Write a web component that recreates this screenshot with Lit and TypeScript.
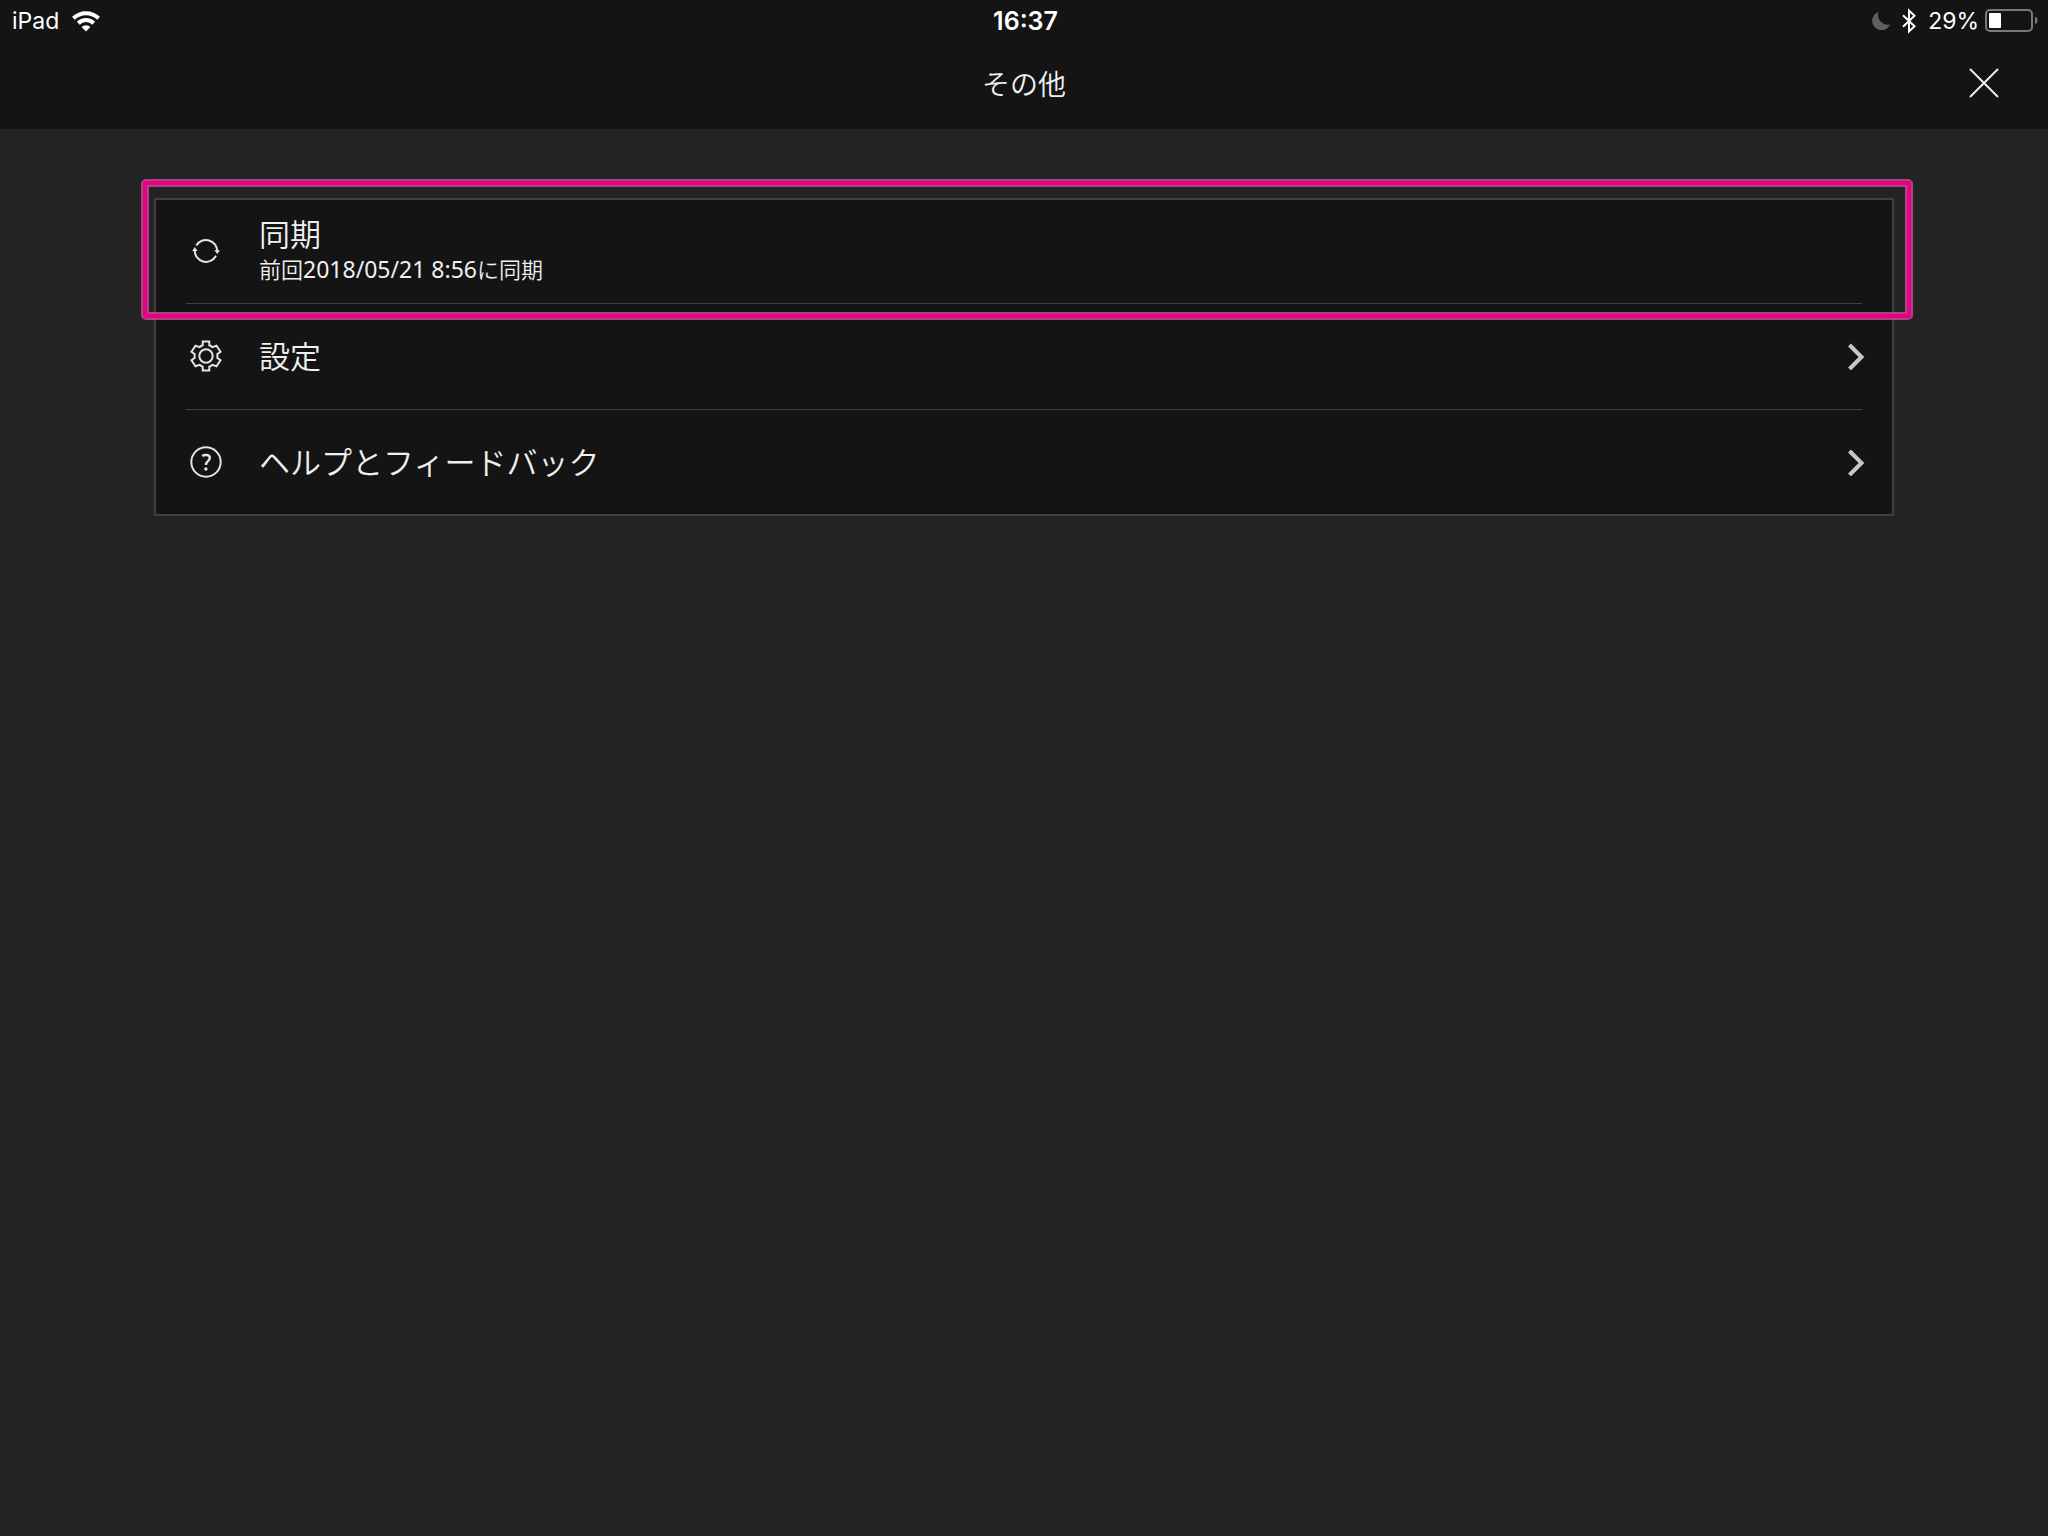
import { LitElement, html, css, svg, nothing } from "lit";
import { customElement } from "lit/decorators.js";

interface MenuEntry {
  label: string;
  note?: unknown;
  icon: unknown;
  chevron: boolean;
  highlighted?: boolean;
}

const syncIcon = svg`
  <path d="M7.300 12.500A11.300 11.300 0 0 1 28.300 18.500M27 22.800A11.300 11.300 0 0 1 5.700 17" />
  <path class="solid" d="M25.400 17.300H31L28.300 21ZM3.200 18H8.600L5.700 14Z" />`;

const gearIcon = svg`
  <path d="M13.700 2.500H20.300V6.300A11.500 11.500 0 0 1 23.400 8.100L27.500 6.800L31.500 12.800L28.300 15.200A11.500 11.500 0 0 1 28.300 18.800L31.500 21.200L27.500 27.200L23.400 25.900A11.500 11.500 0 0 1 20.300 27.700V31.500H13.700V27.700A11.500 11.500 0 0 1 10.600 25.900L6.500 27.200L2.500 21.200L5.700 18.800A11.500 11.500 0 0 1 5.700 15.200L2.500 12.800L6.500 6.800L10.600 8.100A11.500 11.500 0 0 1 13.700 6.300Z" />
  <circle cx="17" cy="17" r="6.700" />`;

const helpIcon = svg`
  <circle cx="17" cy="17" r="14.700" />
  <path class="mark" d="M13.200 10.900C15.500 9.500 20.800 9.300 20.800 13.100C20.800 16.300 16.900 16.200 16.900 20" />
  <circle class="solid" cx="16.900" cy="24" r="1.700" />`;

const entries: MenuEntry[] = [
  {
    label: "同期",
    note: html`前回<time class="date" datetime="2018-05-21T08:56">2018/05/21 8:56</time>に同期`,
    icon: syncIcon,
    chevron: false,
    highlighted: true,
  },
  { label: "設定", icon: gearIcon, chevron: true },
  { label: "ヘルプとフィードバック", icon: helpIcon, chevron: true },
];

@customElement("status-bar")
export class StatusBar extends LitElement {
  static styles = css`
    :host {
      display: grid;
      grid-template-columns: 1fr auto 1fr;
      align-items: center;
      height: 41px;
      padding: 0 9px 0 12px;
      color: #fff;
      font: 23px/32px Inter, "Liberation Sans", sans-serif;
    }
    .group {
      display: flex;
      align-items: center;
      gap: 12px;
    }
    .right {
      justify-content: flex-end;
    }
    .power {
      display: flex;
      align-items: center;
      gap: 6px;
    }
    .time {
      font-size: 25px;
      font-weight: 600;
    }
    svg {
      display: block;
    }
  `;

  render() {
    return html`
      <div class="group">
        <span>iPad</span>
        <svg width="30" height="24" viewBox="0 0 30 24" fill="none" stroke="#fff" stroke-width="4" aria-label="Wi-Fi">
          <path d="M2.400 9.200A18.200 18.200 0 0 1 27.600 9.200" />
          <path d="M7.300 14.200A11 11 0 0 1 22.700 14.200" />
          <path d="M15 22.500L10.600 18A6.200 6.200 0 0 1 19.400 18Z" fill="#fff" stroke="none" />
        </svg>
      </div>
      <span class="time">16:37</span>
      <div class="group right">
        <svg width="18" height="20" viewBox="0 0 18 20" aria-label="おやすみモード">
          <path d="M6.500 1A9.300 9.300 0 1 0 18 13.500A9.800 9.800 0 0 1 6.500 1Z" fill="#606060" />
        </svg>
        <svg width="14" height="26" viewBox="0 0 14 26" fill="none" stroke="#fff" stroke-width="2" aria-label="Bluetooth">
          <path d="M1 7.200L12.500 18.200L7 23.500V2.500L12.500 7.800L1 18.800" />
        </svg>
        <div class="power">
          <span>29%</span>
          <svg width="54" height="23" viewBox="0 0 54 23" aria-hidden="true">
            <rect x="1" y="1" width="46" height="21" rx="4" fill="none" stroke="#7a7a7a" stroke-width="2" />
            <rect x="4" y="4" width="12" height="15" rx="1" fill="#fff" />
            <path d="M50 7.500A4.400 4.400 0 0 1 50 15.500Z" fill="#7a7a7a" />
          </svg>
        </div>
      </div>
    `;
  }
}

@customElement("menu-row")
export class MenuRow extends LitElement {
  static properties = { entry: { attribute: false } };
  declare entry: MenuEntry;

  static styles = css`
    :host {
      display: block;
      position: relative;
    }
    .row {
      display: flex;
      align-items: center;
      box-sizing: border-box;
      width: 100%;
      height: 106px;
      margin: 0;
      padding: 0 29px 2px 35px;
      border: 0;
      background: none;
      color: #f0f0f0;
      text-align: left;
      font: 350 31px/40px "Noto Sans CJK JP", sans-serif;
    }
    .icon {
      flex: none;
      fill: none;
      stroke: #e4e4e4;
      stroke-width: 2;
    }
    .solid {
      fill: #e4e4e4;
      stroke: none;
    }
    .mark {
      stroke-width: 2.400;
    }
    .texts {
      flex: 1;
      display: flex;
      flex-direction: column;
      padding: 0 0 3px 36px;
    }
    .note {
      font-size: 22px;
      line-height: 30px;
    }
    .date {
      font: 400 23px/30px "Noto Sans", sans-serif;
    }
    .chevron {
      flex: none;
      fill: none;
      stroke: #c7c7cc;
      stroke-width: 4;
    }
    .frame {
      position: absolute;
      inset: -19px -19px -16px -13px;
      border: 8px solid rgba(200, 80, 150, 0.8);
      border-radius: 5px;
      pointer-events: none;
    }
    .frame::after {
      content: "";
      position: absolute;
      inset: -6px;
      border: 4px solid #ea0085;
    }
  `;

  render() {
    const { label, note, icon, chevron, highlighted } = this.entry;
    return html`
      <button class="row" type="button">
        <svg class="icon" width="34" height="34" viewBox="0 0 34 34" aria-hidden="true">${icon}</svg>
        <span class="texts">
          <span>${label}</span>
          ${note ? html`<span class="note">${note}</span>` : nothing}
        </span>
        ${chevron
          ? html`<svg class="chevron" width="18" height="28" viewBox="0 0 18 28" aria-hidden="true">
              <path d="M2.500 3L14.500 15L2.500 27" />
            </svg>`
          : nothing}
      </button>
      ${highlighted ? html`<div class="frame"></div>` : nothing}
    `;
  }
}

@customElement("app-root")
export class AppRoot extends LitElement {
  static styles = css`
    :host {
      display: block;
      min-height: 100vh;
      background: #232323;
    }
    .header {
      padding-bottom: 4px;
      background: #141414;
    }
    .title-bar {
      display: grid;
      grid-template-columns: 1fr auto 1fr;
      align-items: center;
      height: 84px;
      padding: 0 47px;
      box-sizing: border-box;
    }
    .title {
      grid-column: 2;
      margin: 0;
      color: #f0f0f0;
      font: 350 28px/40px "Noto Sans CJK JP", sans-serif;
    }
    .close {
      justify-self: end;
      padding: 0;
      border: 0;
      background: none;
    }
    .close svg {
      display: block;
    }
    .list {
      margin: 69px 154px 0;
      padding: 0;
      list-style: none;
      background: #141414;
      outline: 2px solid #404040;
      outline-offset: -2px;
    }
    .item:not(:last-child) {
      background: linear-gradient(#404040, #404040) center bottom / calc(100% - 64px) 1px no-repeat;
    }
    .item:first-child {
      position: relative;
      z-index: 1;
    }
  `;

  render() {
    return html`
      <header class="header">
        <status-bar></status-bar>
        <div class="title-bar">
          <h1 class="title">その他</h1>
          <button class="close" type="button" aria-label="閉じる">
            <svg width="34" height="34" viewBox="0 0 34 34" fill="none" stroke="#eee" stroke-width="2">
              <path d="M3 3L31 31M31 3L3 31" />
            </svg>
          </button>
        </div>
      </header>
      <main>
        <ul class="list">
          ${entries.map((entry) => html`<li class="item"><menu-row .entry=${entry}></menu-row></li>`)}
        </ul>
      </main>
    `;
  }
}
